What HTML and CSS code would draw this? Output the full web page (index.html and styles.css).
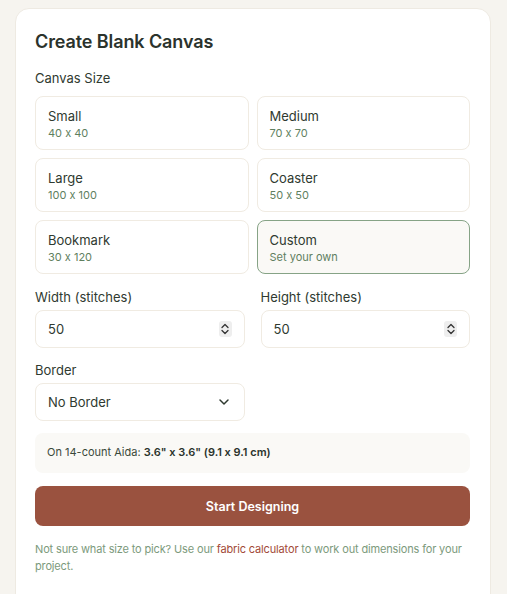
FILE: index.html
```html
<!DOCTYPE html>
<html>
<head>
<meta charset="utf-8">
<link rel="stylesheet" href="styles.css">
</head>
<body>
<div class="card">
  <h1 class="title">Create Blank Canvas</h1>
  <div class="label">Canvas Size</div>
  <div class="sizes">
    <div class="opt"><div class="opt-name">Small</div><div class="opt-dim">40 x 40</div></div>
    <div class="opt"><div class="opt-name">Medium</div><div class="opt-dim">70 x 70</div></div>
    <div class="opt"><div class="opt-name">Large</div><div class="opt-dim">100 x 100</div></div>
    <div class="opt"><div class="opt-name">Coaster</div><div class="opt-dim">50 x 50</div></div>
    <div class="opt"><div class="opt-name">Bookmark</div><div class="opt-dim">30 x 120</div></div>
    <div class="opt selected"><div class="opt-name">Custom</div><div class="opt-dim">Set your own</div></div>
  </div>
  <div class="fields">
    <div class="field">
      <div class="label">Width (stitches)</div>
      <div class="input"><span>50</span>
        <span class="spin"><svg width="10" height="14" viewBox="0 0 10 14"><path d="M2 5.5 L5 2.5 L8 5.5 M2 8.5 L5 11.5 L8 8.5" fill="none" stroke="#333" stroke-width="1.3" stroke-linecap="round" stroke-linejoin="round"/></svg></span>
      </div>
    </div>
    <div class="field">
      <div class="label">Height (stitches)</div>
      <div class="input"><span>50</span>
        <span class="spin"><svg width="10" height="14" viewBox="0 0 10 14"><path d="M2 5.5 L5 2.5 L8 5.5 M2 8.5 L5 11.5 L8 8.5" fill="none" stroke="#333" stroke-width="1.3" stroke-linecap="round" stroke-linejoin="round"/></svg></span>
      </div>
    </div>
    <div class="field">
      <div class="label">Border</div>
      <div class="input"><span>No Border</span>
        <svg class="chev" width="12" height="10" viewBox="0 0 12 10"><path d="M2 3 L6 7 L10 3" fill="none" stroke="#2f3a30" stroke-width="1.5" stroke-linecap="round" stroke-linejoin="round"/></svg>
      </div>
    </div>
  </div>
  <div class="info">On 14-count Aida: <b>3.6" x 3.6" (9.1 x 9.1 cm)</b></div>
  <button class="start">Start Designing</button>
  <p class="note"><span>Not sure what size to pick? Use our</span> <a href="#">fabric calculator</a> <span>to work out dimensions for your</span><br><span>project.</span></p>
</div>
</body>
</html>
```
FILE: styles.css
```css
html, body { margin: 0; padding: 0; }
body {
  background: #f6f4ef;
  font-family: Inter, "Noto Sans", sans-serif;
  font-feature-settings: "calt" 0;
  color: #2f3a30;
  padding: 8px 16px 0 15px;
  height: 594px;
  box-sizing: border-box;
  overflow: hidden;
}
.card {
  background: #ffffff;
  border: 1px solid #eeeae2;
  border-radius: 14px;
  padding: 21px 20px 40px 19px;
  min-height: 620px;
  box-sizing: border-box;
}
.title {
  margin: 0 0 16px 0;
  font-size: 18px;
  font-weight: 600;
  line-height: 24px;
  color: #2b332c;
  letter-spacing: -0.1px;
}
.label {
  font-size: 13px;
  line-height: 16px;
  color: #2f3a30;
  margin-bottom: 10px;
}
.sizes {
  display: grid;
  grid-template-columns: 1fr 1fr;
  gap: 8px;
}
.opt {
  border: 1px solid #f0ebe2;
  border-radius: 8px;
  height: 54px;
  box-sizing: border-box;
  padding: 11px 12px;
}
.opt.selected {
  border-color: #86a386;
  background: #faf9f6;
}
.opt-name { font-size: 13px; line-height: 17px; color: #2f3a30; }
.opt-dim { font-size: 11px; line-height: 15px; color: #5f7f5f; margin-top: 1px; }
.fields {
  display: grid;
  grid-template-columns: 1fr 1fr;
  column-gap: 16px;
  row-gap: 14px;
  margin-top: 15px;
}
.field .label { margin-bottom: 5px; }
.input {
  height: 38px;
  box-sizing: border-box;
  border: 1px solid #f0ebe2;
  border-radius: 8px;
  display: flex;
  align-items: center;
  justify-content: space-between;
  padding: 0 12px 0 12px;
  font-size: 13px;
  color: #2f3a30;
}
.spin {
  display: flex;
  align-items: center;
  justify-content: center;
  width: 13px;
  height: 16px;
  background: #eeeeee;
  border-radius: 3px;
}
.chev { margin-right: 2px; }
.info {
  margin-top: 12px;
  background: #faf9f6;
  border-radius: 8px;
  padding: 12px 12px 13px 12px;
  font-size: 11px;
  line-height: 15px;
  color: #3a4a3b;
}
.info b { font-weight: 600; color: #2b332c; }
.start {
  display: block;
  width: 100%;
  margin-top: 13px;
  height: 40px;
  border: none;
  border-radius: 8px;
  background: #9a523f;
  color: #ffffff;
  font-family: inherit;
  font-size: 12.5px;
  font-weight: 600;
}
.note {
  margin: 15px 0 0 0;
  font-size: 11px;
  line-height: 17px;
  letter-spacing: -0.15px;
  color: #7c9a7c;
}
.note a { color: #a24a38; text-decoration: none; }
```
